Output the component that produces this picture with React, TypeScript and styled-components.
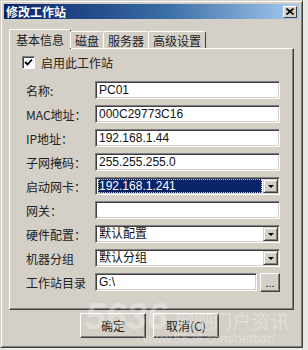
import React from 'react'
import styled, { createGlobalStyle } from 'styled-components'

const colors = {
  face: '#d4d0c8',
  light: '#ffffff',
  shadow: '#808080',
  dark: '#404040',
  navy: '#0a246a'
}

const GlobalStyle = createGlobalStyle`
  html, body {
    margin: 0;
    padding: 0;
    background: #e8e8e4;
  }
  body {
    font-family: "Liberation Sans", "Noto Sans CJK SC", sans-serif;
    font-size: 12px;
    color: #000;
  }
`

const Window = styled.div`
  position: relative;
  width: 303px;
  height: 348px;
  box-sizing: border-box;
  background: ${colors.face};
  border: 1px solid ${colors.face};
  border-right-color: ${colors.dark};
  border-bottom-color: ${colors.dark};
  box-shadow: inset 1px 1px 0 ${colors.light}, inset -1px -1px 0 ${colors.shadow};
  padding: 3px 3px 0;
  overflow: hidden;
`
const TitleBar = styled.div`
  height: 15px;
  display: flex;
  align-items: center;
  justify-content: space-between;
  padding: 0 2px 0 2px;
  background: linear-gradient(to right, #0a246a, #3a6ea5 55%, #a6caf0);
`
const Title = styled.span`
  color: #fff;
  font-weight: bold;
  font-size: 12px;
  font-family: "Noto Sans CJK SC", sans-serif;
  line-height: 15px;
`
const CloseButton = styled.div`
  width: 14px;
  height: 12px;
  box-sizing: border-box;
  background: ${colors.face};
  border: 1px solid;
  border-color: ${colors.light} ${colors.dark} ${colors.dark} ${colors.light};
  display: flex;
  align-items: center;
  justify-content: center;
`
const Body = styled.div`
  padding: 10px 5px 0 5px;
`
const TabRow = styled.div`
  display: flex;
  align-items: flex-end;
  height: 19px;
  position: relative;
  z-index: 1;
`
const Tab = styled.div<{ active?: boolean }>`
  box-sizing: border-box;
  height: ${p => (p.active ? 20 : 17)}px;
  margin-bottom: ${p => (p.active ? -1 : 0)}px;
  padding: 0 ${p => (p.active ? 6 : 4)}px;
  margin-left: ${p => (p.active ? 0 : -1)}px;
  background: ${colors.face};
  border: 1px solid ${colors.light};
  border-bottom: none;
  border-right: 1px solid ${colors.dark};
  border-radius: 2px 2px 0 0;
  display: flex;
  align-items: center;
  font-family: "Noto Sans CJK SC", sans-serif;
  font-size: 12px;
  color: #222;
  white-space: nowrap;
`
const Panel = styled.div`
  box-sizing: border-box;
  height: 262px;
  border: 1px solid;
  border-color: ${colors.light} ${colors.dark} ${colors.dark} ${colors.light};
  box-shadow: inset -1px -1px 0 ${colors.shadow};
  padding: 7px 16px 0 12px;
`
const CheckRow = styled.label`
  display: flex;
  align-items: center;
  gap: 6px;
  height: 13px;
  font-family: "Noto Sans CJK SC", sans-serif;
  color: #222;
  margin-bottom: 12px;
`
const CheckBox = styled.span`
  width: 13px;
  height: 13px;
  box-sizing: border-box;
  background: #fff;
  border: 1px solid;
  border-color: ${colors.shadow} ${colors.light} ${colors.light} ${colors.shadow};
  box-shadow: inset 1px 1px 0 ${colors.dark};
  display: flex;
  align-items: center;
  justify-content: center;
`
const Form = styled.div`
  display: grid;
  grid-template-columns: 69px 185px;
  row-gap: 6px;
  padding-left: 4px;
`
const Label = styled.span`
  height: 18px;
  display: flex;
  align-items: center;
  font-family: "Noto Sans CJK SC", sans-serif;
  font-size: 12px;
  color: #222;
`
const Field = styled.div`
  box-sizing: border-box;
  height: 18px;
  background: #fff;
  border: 1px solid;
  border-color: ${colors.shadow} ${colors.light} ${colors.light} ${colors.shadow};
  box-shadow: inset 1px 1px 0 ${colors.dark}, inset -1px -1px 0 ${colors.face};
  display: flex;
  align-items: center;
  padding: 0 0 0 2px;
  font-size: 12px;
  font-family: "Liberation Sans", "Noto Sans CJK SC", sans-serif;
  overflow: hidden;
`
const Value = styled.span<{ selected?: boolean }>`
  flex: 1;
  height: 14px;
  line-height: 14px;
  padding-left: 1px;
  background: ${p => (p.selected ? colors.navy : 'transparent')};
  color: ${p => (p.selected ? '#fff' : '#111')};
  margin-right: 1px;
  outline: ${p => (p.selected ? '1px dotted #c8c8a0' : 'none')};
  outline-offset: -1px;
  white-space: nowrap;
`
const DropButton = styled.div`
  width: 15px;
  height: 14px;
  box-sizing: border-box;
  background: ${colors.face};
  border: 1px solid;
  border-color: ${colors.face} ${colors.dark} ${colors.dark} ${colors.face};
  box-shadow: inset 1px 1px 0 ${colors.light}, inset -1px -1px 0 ${colors.shadow};
  display: flex;
  align-items: center;
  justify-content: center;
  margin-right: 1px;
`
const Arrow = styled.span`
  width: 0;
  height: 0;
  border-left: 3px solid transparent;
  border-right: 3px solid transparent;
  border-top: 3px solid #000;
`
const DirRow = styled.div`
  display: flex;
  gap: 3px;
`
const Browse = styled.div`
  width: 20px;
  height: 19px;
  box-sizing: border-box;
  background: ${colors.face};
  border: 1px solid;
  border-color: ${colors.light} ${colors.dark} ${colors.dark} ${colors.light};
  box-shadow: inset -1px -1px 0 ${colors.shadow};
  display: flex;
  align-items: flex-end;
  justify-content: center;
  font-size: 11px;
  line-height: 12px;
  padding-bottom: 2px;
`
const Buttons = styled.div`
  display: flex;
  justify-content: center;
  gap: 7px;
  margin-top: 3px;
  padding-right: 4px;
`
const Button = styled.div`
  width: 66px;
  height: 25px;
  box-sizing: border-box;
  background: ${colors.face};
  border: 1px solid;
  border-color: ${colors.light} ${colors.dark} ${colors.dark} ${colors.light};
  box-shadow: inset -1px -1px 0 ${colors.shadow};
  display: flex;
  align-items: center;
  justify-content: center;
  font-family: "Noto Sans CJK SC", sans-serif;
  font-size: 12px;
  color: #222;
`
const Watermark = styled.div`
  position: absolute;
  left: 84px;
  top: 300px;
  pointer-events: none;
  white-space: nowrap;
  color: rgba(255, 255, 255, 0.32);
  font-family: "Liberation Sans", "Noto Sans CJK SC", sans-serif;
`
const MarkBig = styled.div`
  display: flex;
  align-items: baseline;
  gap: 8px;
  font-size: 37px;
  font-style: italic;
  font-weight: bold;
  line-height: 32px;
  span {
    font-size: 19px;
    font-style: normal;
    font-weight: normal;
    font-family: "Noto Sans CJK SC", sans-serif;
  }
`
const MarkSmall = styled.div`
  font-size: 13px;
  padding-left: 58px;
  margin-top: -6px;
`

type Row = { label: string; value: string; select?: boolean; selected?: boolean }

const rows: Row[] = [
  { label: '名称:', value: 'PC01' },
  { label: 'MAC地址：', value: '000C29773C16' },
  { label: 'IP地址：', value: '192.168.1.44' },
  { label: '子网掩码：', value: '255.255.255.0' },
  { label: '启动网卡：', value: '192.168.1.241', select: true, selected: true },
  { label: '网关：', value: '' },
  { label: '硬件配置：', value: '默认配置', select: true },
  { label: '机器分组', value: '默认分组', select: true }
]

const App = () => {
  return (
    <>
      <GlobalStyle />
      <Window>
        <TitleBar>
          <Title>修改工作站</Title>
          <CloseButton>
            <svg width="8" height="7" viewBox="0 0 8 7">
              <path d="M0.5 0.5 L7.5 6.5 M7.5 0.5 L0.5 6.5" stroke="#000" strokeWidth="1.6" />
            </svg>
          </CloseButton>
        </TitleBar>
        <Body>
          <TabRow>
            <Tab active>基本信息</Tab>
            <Tab>磁盘</Tab>
            <Tab>服务器</Tab>
            <Tab>高级设置</Tab>
          </TabRow>
          <Panel>
            <CheckRow>
              <CheckBox>
                <svg width="9" height="9" viewBox="0 0 9 9">
                  <path d="M1 4 L3.5 6.5 L8 1.5" stroke="#000" strokeWidth="1.8" fill="none" />
                </svg>
              </CheckBox>
              启用此工作站
            </CheckRow>
            <Form>
              {rows.map(r => (
                <React.Fragment key={r.label}>
                  <Label>{r.label}</Label>
                  <Field>
                    <Value selected={r.selected}>{r.value}</Value>
                    {r.select && (
                      <DropButton>
                        <Arrow />
                      </DropButton>
                    )}
                  </Field>
                </React.Fragment>
              ))}
              <Label>工作站目录</Label>
              <DirRow>
                <Field style={{ flex: 1 }}>
                  <Value>G:\</Value>
                </Field>
                <Browse>...</Browse>
              </DirRow>
            </Form>
          </Panel>
          <Buttons>
            <Button>确定</Button>
            <Button>取消(C)</Button>
          </Buttons>
        </Body>
        <Watermark>
          <MarkBig>
            5636<span>网吧门户资讯</span>
          </MarkBig>
          <MarkSmall>www.5636.com/netbar/</MarkSmall>
        </Watermark>
      </Window>
    </>
  )
}

export default App
